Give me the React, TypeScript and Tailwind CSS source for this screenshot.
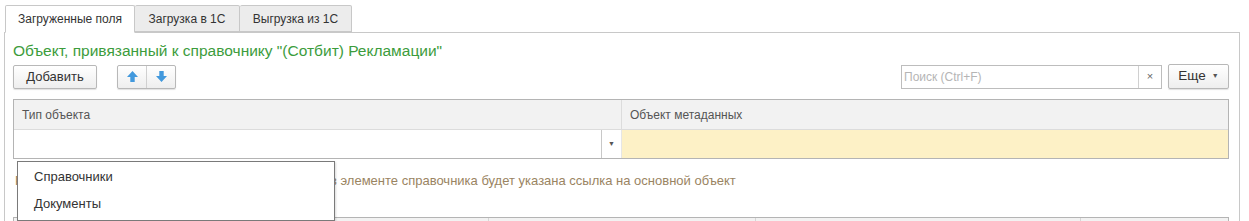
import React from 'react';

function ArrowUp() {
  return (
    <svg width="13" height="13" viewBox="0 0 13 13">
      <path d="M6.5 1 L12 7 L8.7 7 L8.7 12 L4.3 12 L4.3 7 L1 7 Z" fill="#4299dd" />
    </svg>
  );
}

function ArrowDown() {
  return (
    <svg width="13" height="13" viewBox="0 0 13 13">
      <path d="M6.5 12 L12 6 L8.7 6 L8.7 1 L4.3 1 L4.3 6 L1 6 Z" fill="#4299dd" />
    </svg>
  );
}

const btn =
  'flex items-center justify-center border border-[#b8b8b8] rounded-[2px] bg-gradient-to-b from-white to-[#eeeeee] shadow-[0_1px_1px_rgba(0,0,0,0.12)] text-[13px] text-[#333]';

export default function App() {
  return (
    <div
      className="relative w-[1249px] h-[221px] overflow-hidden bg-white text-[#404040]"
      style={{ fontFamily: '"Liberation Sans", Arial, sans-serif' }}
    >
      <div className="pt-[5px] pl-[4px] w-[1240px]">
        {/* Tabs */}
        <div className="flex items-end h-[28px] border-b border-[#c8c8c8] pl-[1px]">
          <div className="h-[28px] w-[130px] -mb-px flex items-center justify-center border border-[#c8c8c8] border-b-white bg-white text-[12px] text-[#333] rounded-t-[2px]">
            Загруженные поля
          </div>
          <div className="h-[27px] w-[105px] flex items-center justify-center border border-l-0 border-[#c8c8c8] bg-[#ececec] text-[12px] text-[#333] rounded-t-[2px]">
            Загрузка в 1С
          </div>
          <div className="h-[27px] w-[112px] flex items-center justify-center border border-l-0 border-[#c8c8c8] bg-[#ececec] text-[12px] text-[#333] rounded-t-[2px]">
            Выгрузка из 1С
          </div>
        </div>

        {/* Frame body */}
        <div className="border-l border-r border-[#c8c8c8] h-[200px] pl-[8px] pr-[10px]">
          <div className="pt-[9px] h-[31px] text-[15.5px] leading-[18px] text-[#3c9c3c]">
            Объект, привязанный к справочнику "(Сотбит) Рекламации"
          </div>

          <div className="flex items-center h-[25px]">
            <div className={`${btn} w-[84px] h-[24px]`}>Добавить</div>
            <div className={`${btn} ml-[20px] w-[59px] h-[24px] !justify-start`}>
              <div className="w-[30px] h-full flex items-center justify-center border-r border-[#d0d0d0]">
                <ArrowUp />
              </div>
              <div className="w-[28px] h-full flex items-center justify-center">
                <ArrowDown />
              </div>
            </div>
            <div className="flex-1" />
            <div className="flex h-[24px] w-[261px] border border-[#bdbdbd] bg-white">
              <div className="flex-1 flex items-center pl-[2px] text-[12px] text-[#b5b5b5]">Поиск (Ctrl+F)</div>
              <div className="w-[23px] flex items-center justify-center border-l border-[#d0d0d0] text-[11px] text-[#666]">×</div>
            </div>
            <div className={`${btn} ml-[6px] w-[61px] h-[25px] gap-[6px]`}>
              <span className="text-[13.5px]">Еще</span>
              <span className="text-[7px] text-[#555]">▼</span>
            </div>
          </div>

          {/* Table */}
          <div className="mt-[10px] border border-[#b4b4b4] w-[1216px]">
            <div className="flex h-[30px] bg-[#f2f2f2] border-b border-[#dcdcdc] text-[12px] text-[#555]">
              <div className="w-[608px] flex items-center pl-[8px] border-r border-[#dcdcdc]">Тип объекта</div>
              <div className="flex-1 flex items-center pl-[8px]">Объект метаданных</div>
            </div>
            <div className="flex h-[28px]">
              <div className="w-[588px] bg-white border-r border-[#c8c8c8]" />
              <div className="w-[20px] bg-white flex items-center justify-center text-[7px] text-[#555] border-r border-[#e6e6e6]">▼</div>
              <div className="flex-1 bg-[#fdf1c6]" />
            </div>
          </div>

          <div className="h-[58px] pt-[14px] pl-[2px] text-[13px] leading-[15px] text-[#9a8462]">
            Реквизит объекта метаданных в котором при вводе в элементе справочника будет указана ссылка на основной объект
          </div>

          <div className="flex h-[20px] w-[1216px] border-t border-l border-r border-[#b4b4b4] bg-[#f2f2f2]">
            <div className="w-[475px] border-r border-[#d6d6d6]" />
            <div className="w-[267px] border-r border-[#d6d6d6]" />
            <div className="w-[325px] border-r border-[#d6d6d6]" />
            <div className="flex-1" />
          </div>
        </div>
      </div>

      {/* Dropdown list */}
      <div className="absolute left-[17px] top-[161px] w-[318px] h-[60px] border border-[#7a7a7a] bg-white shadow-[1px_1px_2px_rgba(0,0,0,0.15)] text-[13px] text-[#333]">
        <div className="h-[28px] flex items-center pl-[16px] pt-[2px]">Справочники</div>
        <div className="h-[28px] flex items-center pl-[16px]">Документы</div>
      </div>
    </div>
  );
}
